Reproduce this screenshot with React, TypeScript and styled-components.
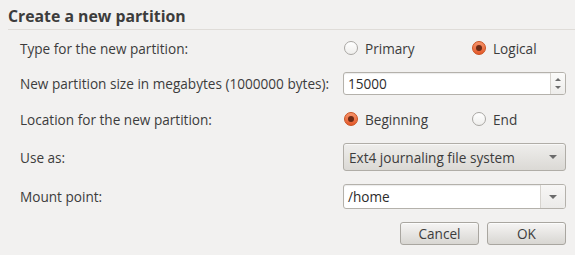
import React, { useState } from 'react'
import styled, { createGlobalStyle } from 'styled-components'

const GlobalStyle = createGlobalStyle`
  html, body {
    margin: 0;
    padding: 0;
    background: #f2f1f0;
  }
  body {
    font-family: 'Open Sans', 'DejaVu Sans', sans-serif;
    color: #3c3c3c;
  }
`

const Dialog = styled.div`
  width: 575px;
  height: 255px;
  box-sizing: border-box;
  padding-top: 6px;
  overflow: hidden;
`

const Title = styled.h1`
  margin: 0 0 0 8px;
  padding-bottom: 3px;
  font-size: 15.8px;
  font-weight: 700;
  line-height: 20px;
  color: #3c3c3c;
  border-bottom: 1px solid #dfdcd8;
`

const Form = styled.div`
  display: grid;
  grid-template-columns: 323px 223px;
  grid-template-rows: 22px 23px 22px 28px 25px 23px;
  row-gap: 13px;
  padding: 7px 9px 0 20px;
  align-items: center;
`

const Label = styled.div`
  font-size: 13.6px;
  line-height: 17px;
  color: #3c3c3c;
`

const RadioGroup = styled.div`
  display: grid;
  grid-template-columns: 128px auto;
  align-items: center;
  padding-left: 1px;
`

const RadioOption = styled.label`
  display: flex;
  align-items: center;
  gap: 7px;
  font-size: 13.6px;
  color: #3c3c3c;
  cursor: pointer;
`

const RadioCircle = styled.span<{ $checked: boolean }>`
  width: 14px;
  height: 14px;
  box-sizing: border-box;
  border-radius: 50%;
  display: inline-flex;
  align-items: center;
  justify-content: center;
  border: 1px solid ${p => (p.$checked ? '#c9501f' : '#a9a7a3')};
  background: ${p =>
    p.$checked
      ? 'linear-gradient(#f7936a, #e4592a)'
      : 'linear-gradient(#ffffff, #efeeec)'};
  &::after {
    content: '';
    display: ${p => (p.$checked ? 'block' : 'none')};
    width: 6px;
    height: 6px;
    border-radius: 50%;
    background: #6a2a15;
  }
`

const Entry = styled.div`
  display: flex;
  height: 100%;
  box-sizing: border-box;
  border: 1px solid #b4b1ab;
  border-radius: 3px;
  background: #ffffff;
  box-shadow: inset 0 1px 1px rgba(0, 0, 0, 0.08);
  overflow: hidden;
`

const EntryText = styled.div`
  flex: 1;
  display: flex;
  align-items: center;
  padding-left: 4px;
  font-size: 13.6px;
  color: #2c2c2c;
`

const SpinButtons = styled.div`
  width: 14px;
  border-left: 1px solid #d6d3ce;
  background: linear-gradient(#fbfbfa, #eeedeb);
  display: flex;
  flex-direction: column;
  align-items: center;
  justify-content: center;
  gap: 5px;
`

const Arrow = styled.span<{ $up?: boolean; $size: number }>`
  width: 0;
  height: 0;
  border-left: ${p => p.$size}px solid transparent;
  border-right: ${p => p.$size}px solid transparent;
  ${p =>
    p.$up
      ? `border-bottom: ${p.$size}px solid #6b6b6b;`
      : `border-top: ${p.$size}px solid #6b6b6b;`}
`

const ComboButton = styled.div`
  height: 100%;
  box-sizing: border-box;
  display: flex;
  align-items: center;
  justify-content: space-between;
  padding: 0 8px 0 5px;
  border: 1px solid #b0ada7;
  border-radius: 3px;
  background: linear-gradient(#efeeec, #dbd9d5);
  box-shadow: inset 0 1px 0 rgba(255, 255, 255, 0.6);
  font-size: 13.6px;
  color: #3c3c3c;
`

const ComboSide = styled.div`
  width: 24px;
  border-left: 1px solid #d6d3ce;
  background: linear-gradient(#f7f6f5, #ecebe9);
  display: flex;
  align-items: center;
  justify-content: center;
`

const ButtonRow = styled.div`
  grid-column: 2;
  display: flex;
  justify-content: flex-end;
  gap: 8px;
  height: 100%;
`

const Button = styled.button`
  width: 79px;
  height: 100%;
  box-sizing: border-box;
  border: 1px solid #a9a6a0;
  border-radius: 3px;
  background: linear-gradient(#f6f5f4, #d8d6d2);
  box-shadow: inset 0 1px 0 rgba(255, 255, 255, 0.7);
  font-family: inherit;
  font-size: 13.6px;
  color: #3c3c3c;
  padding: 0;
`

const Radio = ({
  label,
  checked,
  onSelect,
}: {
  label: string
  checked: boolean
  onSelect: () => void
}) => (
  <RadioOption onClick={onSelect}>
    <RadioCircle $checked={checked} />
    {label}
  </RadioOption>
)

const App = () => {
  const [type, setType] = useState('logical')
  const [location, setLocation] = useState('beginning')

  return (
    <Dialog>
      <GlobalStyle />
      <Title>Create a new partition</Title>
      <Form>
        <Label>Type for the new partition:</Label>
        <RadioGroup>
          <Radio
            label="Primary"
            checked={type === 'primary'}
            onSelect={() => setType('primary')}
          />
          <Radio
            label="Logical"
            checked={type === 'logical'}
            onSelect={() => setType('logical')}
          />
        </RadioGroup>

        <Label>New partition size in megabytes (1000000 bytes):</Label>
        <Entry>
          <EntryText>15000</EntryText>
          <SpinButtons>
            <Arrow $up $size={3} />
            <Arrow $size={3} />
          </SpinButtons>
        </Entry>

        <Label>Location for the new partition:</Label>
        <RadioGroup>
          <Radio
            label="Beginning"
            checked={location === 'beginning'}
            onSelect={() => setLocation('beginning')}
          />
          <Radio
            label="End"
            checked={location === 'end'}
            onSelect={() => setLocation('end')}
          />
        </RadioGroup>

        <Label>Use as:</Label>
        <ComboButton>
          Ext4 journaling file system
          <Arrow $size={4} />
        </ComboButton>

        <Label>Mount point:</Label>
        <Entry>
          <EntryText>/home</EntryText>
          <ComboSide>
            <Arrow $size={4} />
          </ComboSide>
        </Entry>

        <ButtonRow>
          <Button>Cancel</Button>
          <Button>OK</Button>
        </ButtonRow>
      </Form>
    </Dialog>
  )
}

export default App
